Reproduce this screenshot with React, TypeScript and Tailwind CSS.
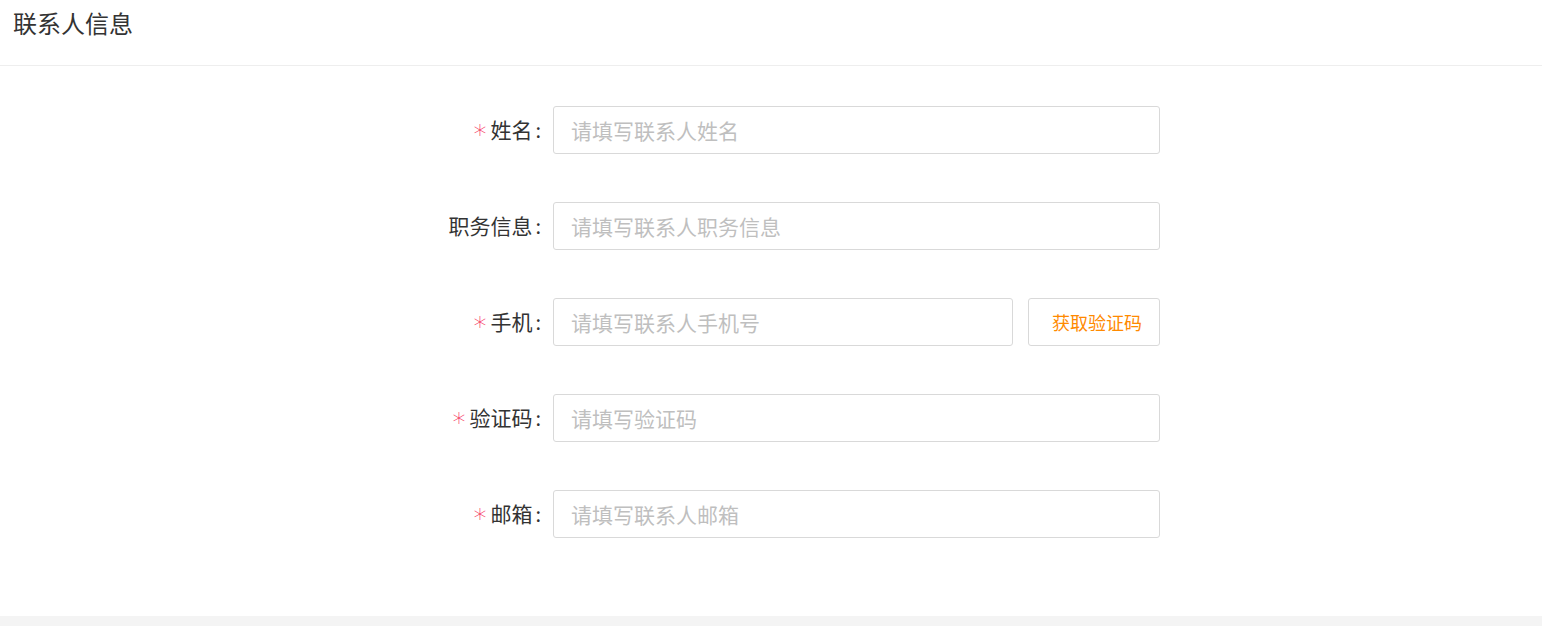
import React from "react";

const font = { fontFamily: '"Noto Sans CJK SC", "Noto Sans", sans-serif' };

function Row({
  label,
  required,
  placeholder,
  children,
}: {
  label: string;
  required?: boolean;
  placeholder: string;
  children?: React.ReactNode;
}) {
  return (
    <div className="flex items-center h-[48px]">
      <div className="w-[171px] shrink-0 flex items-center justify-end pr-[12px] text-[21px] text-[#333]">
        {required && (
          <span
            className="text-[#f5325c] text-[26px] leading-none mr-[4px] translate-y-[5px]"
            style={{ fontFamily: '"DejaVu Sans", sans-serif', fontWeight: 300 }}
          >
            *
          </span>
        )}
        <span>{label}</span>
        <span className="ml-[3px] text-[20px]">:</span>
      </div>
      <div className="flex flex-1 h-full gap-[15px]">
        <input
          className="flex-1 min-w-0 h-full border border-[#d9d9d9] rounded-[3px] px-[17px] text-[21px] text-[#333] placeholder:text-[#bfbfbf] outline-none"
          placeholder={placeholder}
          style={font}
        />
        {children}
      </div>
    </div>
  );
}

export default function App() {
  return (
    <div className="w-[1542px] h-[626px] bg-white flex flex-col" style={font}>
      <div className="h-[66px] shrink-0 border-b border-[#eeeeee] pl-[13px] pt-[6px]">
        <h1 className="text-[24px] leading-[34px] text-[#333] font-normal">联系人信息</h1>
      </div>
      <div className="flex-1 pt-[40px]">
        <div className="w-[778px] ml-[382px] flex flex-col gap-[48px]">
          <Row label="姓名" required placeholder="请填写联系人姓名" />
          <Row label="职务信息" placeholder="请填写联系人职务信息" />
          <Row label="手机" required placeholder="请填写联系人手机号">
            <button className="w-[132px] shrink-0 h-full border border-[#d9d9d9] rounded-[3px] pl-[6px] text-[18px] text-[#ff8a00] bg-white">
              获取验证码
            </button>
          </Row>
          <Row label="验证码" required placeholder="请填写验证码" />
          <Row label="邮箱" required placeholder="请填写联系人邮箱" />
        </div>
      </div>
      <div className="h-[10px] shrink-0 bg-[#f4f4f4]" />
    </div>
  );
}
